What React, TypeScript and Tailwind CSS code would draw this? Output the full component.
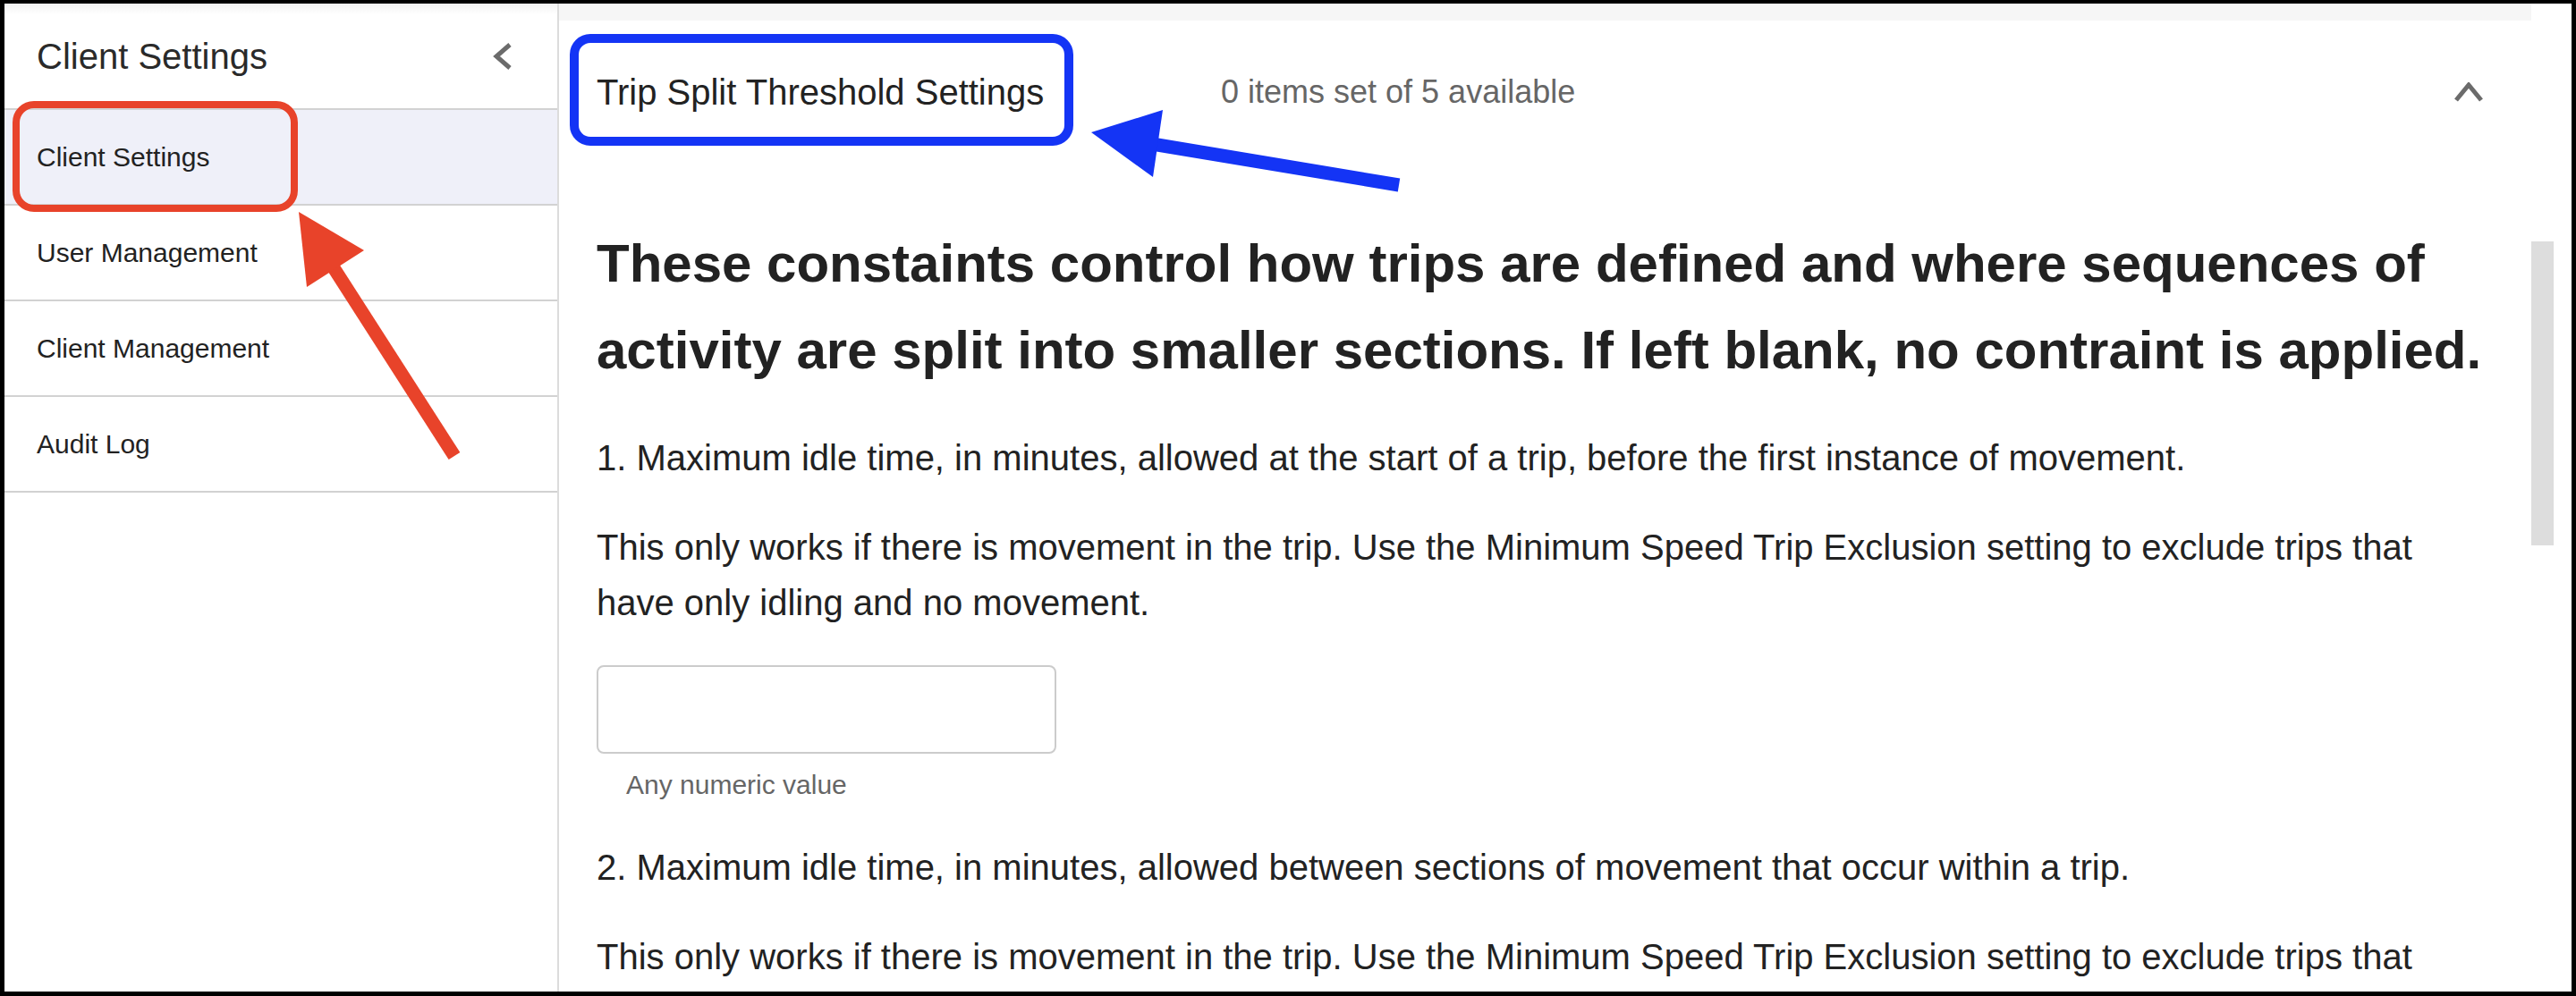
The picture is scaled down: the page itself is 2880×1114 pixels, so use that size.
import React from 'react';

const navItems = ['Client Settings', 'User Management', 'Client Management', 'Audit Log'];

const Annotations = () => (
  <svg
    className="pointer-events-none absolute left-0 top-0"
    width={2880}
    height={1114}
    viewBox="0 0 2880 1114"
  >
    {/* red highlight + arrow */}
    <rect x={18} y={117} width={311} height={116} rx={20} fill="none" stroke="#e8432a" strokeWidth={8} />
    <line x1={508} y1={510} x2={372} y2={298} stroke="#e8432a" strokeWidth={15} />
    <polygon points="334,237 407,280 343,321" fill="#e8432a" />
    {/* blue highlight + arrow */}
    <rect x={642} y={43} width={553} height={115} rx={18} fill="none" stroke="#1434f5" strokeWidth={10} />
    <line x1={1564} y1={207} x2={1288} y2={161} stroke="#1434f5" strokeWidth={15} />
    <polygon points="1220,148 1300,123 1289,198" fill="#1434f5" />
  </svg>
);

const Sidebar = () => (
  <aside className="w-[620px] shrink-0 border-r-2 border-[#dcdcdc] flex flex-col">
    <div className="h-[117px] flex items-center justify-between pl-[36px] pr-[50px] bg-[linear-gradient(to_bottom,#f2f2f2,#ffffff_12px)]">
      <span className="text-[40px] text-[#2a2a2a]">Client Settings</span>
      <svg width={22} height={32} viewBox="0 0 22 32">
        <polyline points="19,3 4,16 19,29" fill="none" stroke="#6b6b6b" strokeWidth={5} />
      </svg>
    </div>
    <ul className="border-b-2 border-[#d2d2d2]">
      {navItems.map((item, i) => (
        <li
          key={item}
          className={`h-[107px] border-t-2 border-[#d2d2d2] flex items-center pl-[36px] text-[30px] text-[#222] ${
            i === 0 ? 'bg-[#eff0f9]' : 'bg-white'
          }`}
        >
          {item}
        </li>
      ))}
    </ul>
  </aside>
);

const Main = () => (
  <main className="flex-1 flex flex-col min-w-0">
    <div className="h-[19px] mr-[45px] bg-[#f6f6f6] shrink-0"></div>
    <div className="h-[160px] shrink-0 flex items-center pl-[42px] pr-[99px]">
      <span className="w-[698px] text-[40px] text-[#222]">Trip Split Threshold Settings</span>
      <span className="text-[36px] text-[#666]">0 items set of 5 available</span>
      <svg className="ml-auto" width={32} height={22} viewBox="0 0 32 22">
        <polyline points="2,20 16,3 30,20" fill="none" stroke="#6b6b6b" strokeWidth={5} />
      </svg>
    </div>
    <div className="flex flex-1 min-h-0">
      <div className="w-[2205px] shrink-0 pl-[42px] pr-[48px] pt-[63px] text-[#222]">
        <h2 className="text-[60px] leading-[97px] font-bold">
          These constaints control how trips are defined and where sequences of activity are split into smaller
          sections. If left blank, no contraint is applied.
        </h2>
        <p className="mt-[41px] text-[40px] leading-[62px]">
          1. Maximum idle time, in minutes, allowed at the start of a trip, before the first instance of movement.
        </p>
        <p className="mt-[38px] text-[40px] leading-[62px]">
          This only works if there is movement in the trip. Use the Minimum Speed Trip Exclusion setting to exclude
          trips that have only idling and no movement.
        </p>
        <input
          type="text"
          className="mt-[39px] block w-[514px] h-[99px] border-2 border-[#cccccc] rounded-[8px] bg-white"
        />
        <div className="mt-[12px] ml-[33px] text-[30px] leading-[45px] text-[#666]">Any numeric value</div>
        <p className="mt-[39px] text-[40px] leading-[62px]">
          2. Maximum idle time, in minutes, allowed between sections of movement that occur within a trip.
        </p>
        <p className="mt-[38px] text-[40px] leading-[62px]">
          This only works if there is movement in the trip. Use the Minimum Speed Trip Exclusion setting to exclude
          trips that have only idling and no movement.
        </p>
      </div>
      <div className="w-[25px] shrink-0">
        <div className="mt-[87px] h-[340px] bg-[#dddddd]"></div>
      </div>
    </div>
  </main>
);

export default function App() {
  return (
    <div className="relative h-screen w-full overflow-hidden bg-white border-black border-t-4 border-l-[5px] border-r-[5px] border-b-[5px] font-['Liberation_Sans',Arial,sans-serif]">
      <div className="flex h-full">
        <Sidebar />
        <Main />
      </div>
      <div className="absolute -left-[5px] -top-[4px]">
        <Annotations />
      </div>
    </div>
  );
}
